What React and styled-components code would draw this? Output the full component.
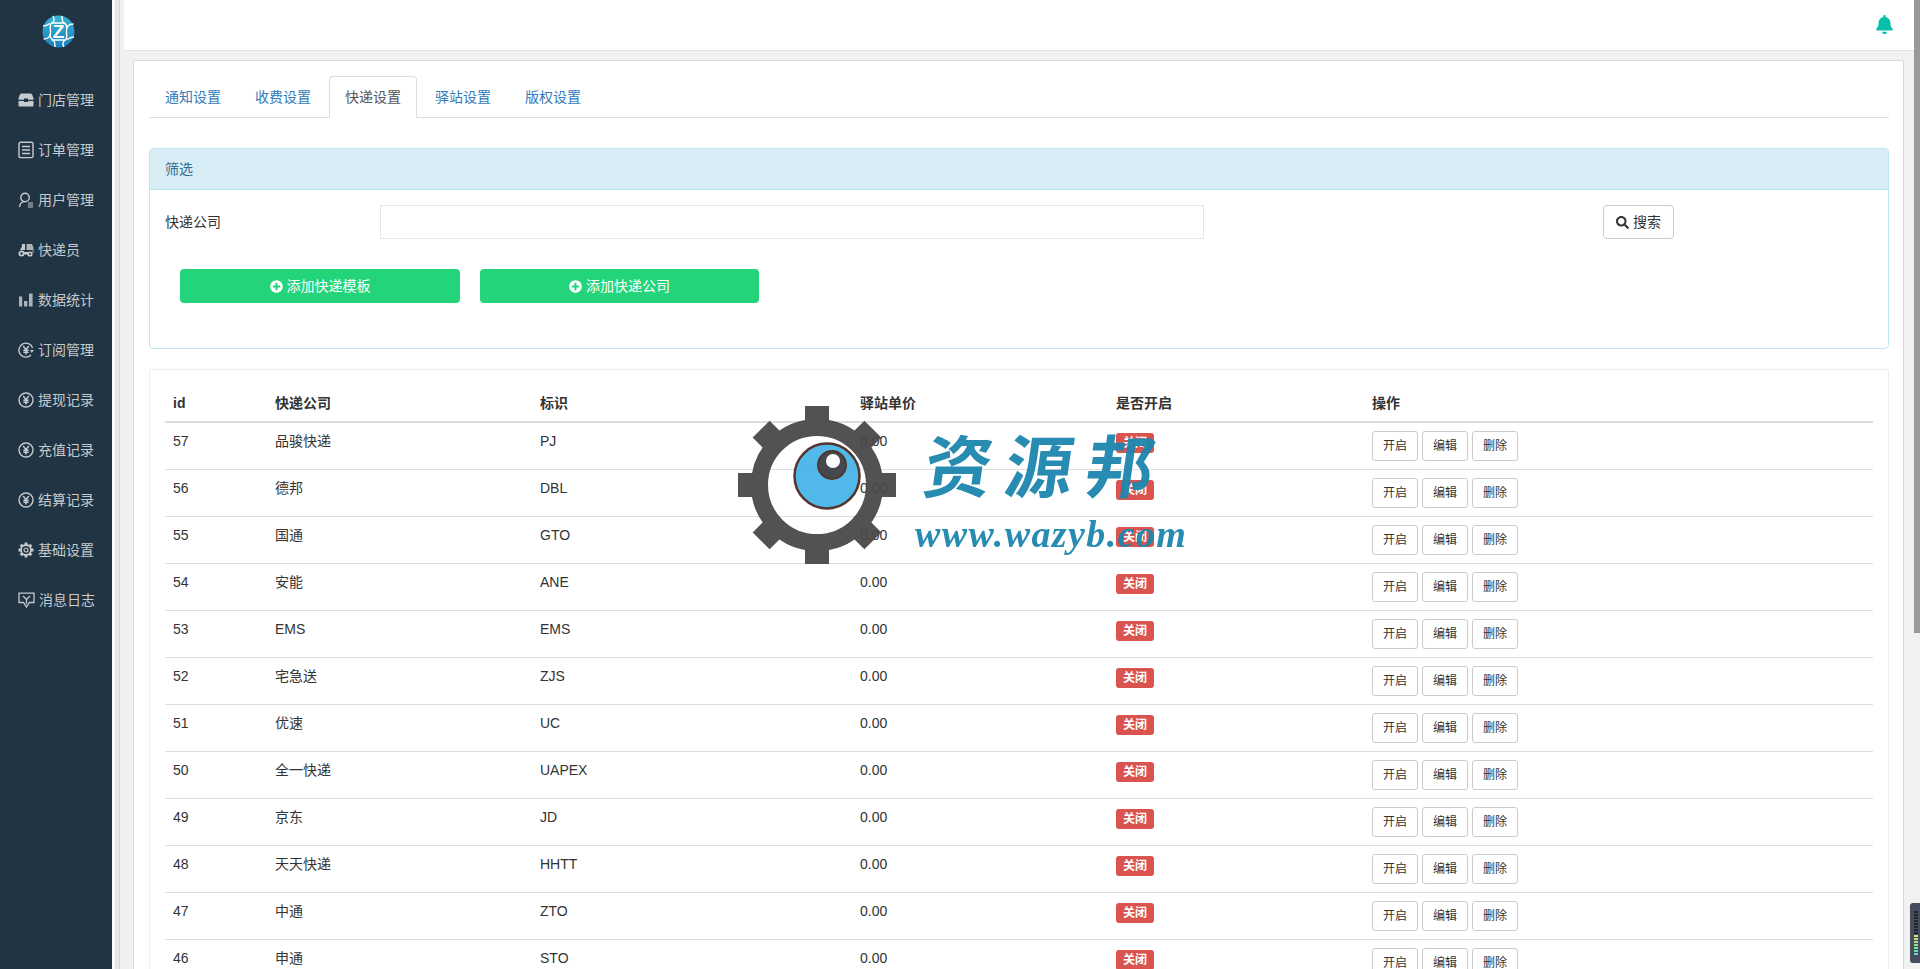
import styled, { createGlobalStyle } from "styled-components";
import { FaBell, FaPlusCircle, FaSearch } from "react-icons/fa";

const GlobalStyle = createGlobalStyle`
  * {
    box-sizing: border-box;
  }
  html,
  body {
    margin: 0;
    height: 100%;
    overflow: hidden;
  }
  body {
    font-family: "Liberation Sans", "Noto Sans CJK SC", sans-serif;
    font-size: 14px;
    line-height: 20px;
    color: #333;
    background: #f1f1f1;
  }
`;

const Page = styled.div`
  position: relative;
  display: flex;
  height: 969px;
  overflow: hidden;
`;

const Sidebar = styled.aside`
  flex: 0 0 112px;
  background: #203443;
  color: #c6cacd;
`;

const LogoWrap = styled.div`
  height: 75px;
  padding-top: 15px;
  display: flex;
  justify-content: center;
  svg {
    margin-left: 4px;
  }
`;

const NavItem = styled.div`
  height: 50px;
  padding-left: 18px;
  display: flex;
  align-items: center;
  gap: 4px;
  white-space: nowrap;
`;

const Gutter = styled.div`
  flex: 0 0 12px;
  background: linear-gradient(
    to right,
    #fbfbfb 0 3px,
    #e6e7eb 3px 7px,
    #d6d7db 7px 8px,
    #f0f0f0 8px 12px
  );
`;

const Main = styled.main`
  flex: 1;
  min-width: 0;
  display: flex;
  flex-direction: column;
`;

const TopBar = styled.header`
  flex: 0 0 51px;
  background: #fff;
  border-bottom: 1px solid #e2e2e2;
  display: flex;
  justify-content: flex-end;
  padding: 15px 20px 0 0;
  color: #08c0aa;
  font-size: 19px;
`;

const Content = styled.div`
  padding: 9px 10px 0 9px;
`;

const Card = styled.div`
  background: #fff;
  border: 1px solid #d9d9d9;
  border-radius: 2px;
  padding: 15px 14px 15px 15px;
`;

const Tabs = styled.ul`
  list-style: none;
  margin: 0 0 30px;
  padding: 0;
  display: flex;
  gap: 2px;
  border-bottom: 1px solid #ddd;
`;

const Tab = styled.li`
  padding: 10px 15px;
  margin-bottom: -1px;
  border: 1px solid ${(p) => (p.$active ? "#ddd" : "transparent")};
  border-bottom-color: ${(p) => (p.$active ? "#fff" : "transparent")};
  border-radius: 4px 4px 0 0;
  background: ${(p) => (p.$active ? "#fff" : "transparent")};
  color: ${(p) => (p.$active ? "#555" : "#337ab7")};
`;

const Panel = styled.section`
  border: 1px solid #bce8f1;
  border-radius: 4px;
`;

const PanelHeading = styled.div`
  padding: 10px 15px;
  background: #d9edf7;
  border-bottom: 1px solid #bce8f1;
  border-radius: 3px 3px 0 0;
  color: #31708f;
`;

const PanelBody = styled.div`
  padding: 15px 15px 45px;
`;

const FilterRow = styled.div`
  display: flex;
  align-items: center;
`;

const FilterLabel = styled.label`
  flex: 0 0 215px;
`;

const FilterInput = styled.input`
  width: 824px;
  height: 34px;
  border: 1px solid #e6e6e6;
  padding: 6px 12px;
`;

const SearchButton = styled.button`
  margin-left: 399px;
  width: 71px;
  height: 34px;
  display: flex;
  align-items: center;
  justify-content: center;
  gap: 4px;
  padding: 0;
  font: inherit;
  color: #333;
  background: #fff;
  border: 1px solid #ccc;
  border-radius: 4px;
  svg {
    font-size: 13px;
  }
`;

const AddRow = styled.div`
  margin-top: 30px;
  padding-left: 15px;
  display: flex;
  gap: 20px;
`;

const AddButton = styled.button`
  width: ${(p) => p.$w}px;
  height: 34px;
  display: flex;
  align-items: center;
  justify-content: center;
  gap: 4px;
  padding: 0;
  font: inherit;
  color: #fff;
  background: #23d47b;
  border: 0;
  border-radius: 4px;
  svg {
    font-size: 13px;
  }
`;

const TableCard = styled.section`
  margin-top: 20px;
  padding: 15px;
  border: 1px solid #eee;
  border-radius: 2px;
`;

const Table = styled.table`
  width: 100%;
  table-layout: fixed;
  border-collapse: collapse;
`;

const HeadCell = styled.th`
  width: ${(p) => (p.$w ? `${p.$w}px` : "auto")};
  padding: 8px;
  text-align: left;
  font-weight: 700;
  border-bottom: 2px solid #ddd;
`;

const Cell = styled.td`
  padding: 8px;
  vertical-align: top;
  border-bottom: 1px solid #ddd;
`;

const Badge = styled.span`
  display: inline-block;
  margin-top: 2px;
  padding: 0 7px;
  font-size: 12px;
  font-weight: 700;
  line-height: 20px;
  color: #fff;
  background: #d9534f;
  border-radius: 3px;
`;

const Actions = styled.div`
  display: flex;
  gap: 4px;
`;

const ActionButton = styled.button`
  width: 46px;
  height: 30px;
  padding: 0;
  font: inherit;
  font-size: 12px;
  color: #333;
  background: #fff;
  border: 1px solid #ccc;
  border-radius: 3px;
`;

const ScrollTrack = styled.div`
  flex: 0 0 6px;
  background: #f1f1f1;
`;

const ScrollThumb = styled.div`
  height: 633px;
  background: #999;
`;

const Meter = styled.div`
  position: absolute;
  right: 0;
  top: 903px;
  width: 10px;
  height: 60px;
  padding: 8px 2px 0 4px;
  display: flex;
  flex-direction: column;
  gap: 1px;
  background: #454c5c;
  border-radius: 3px 0 0 3px;
`;

const MeterBar = styled.span`
  height: 2px;
  background: ${(p) => p.$c};
`;

const Watermark = styled.div`
  position: absolute;
  left: 737px;
  top: 406px;
  display: flex;
  gap: 18px;
  pointer-events: none;
  opacity: 0.95;
`;

const BrandText = styled.div`
  padding-top: 14px;
  color: #1d86ae;
  filter: blur(0.6px);
`;

const BrandName = styled.div`
  padding-left: 10px;
  font-family: "Noto Sans CJK SC", sans-serif;
  font-size: 68px;
  line-height: 86px;
  letter-spacing: 13px;
  font-weight: 700;
  transform: skewX(-8deg);
  white-space: nowrap;
`;

const BrandUrl = styled.div`
  margin-top: 8px;
  font-family: "Liberation Serif", serif;
  font-style: italic;
  font-weight: 700;
  font-size: 38px;
  line-height: 40px;
  letter-spacing: 1.4px;
  white-space: nowrap;
`;

const Logo = () => (
  <svg width="33" height="33" viewBox="0 0 33 33">
    <defs>
      <linearGradient id="logoFill" x1="0" y1="0" x2="0" y2="1">
        <stop offset="0" stopColor="#37b2d2" />
        <stop offset="1" stopColor="#1f80bd" />
      </linearGradient>
    </defs>
    <circle cx="16.5" cy="16.5" r="16" fill="url(#logoFill)" />
    <g fill="none" stroke="#fff" strokeWidth="1.4">
      <path d="M11 1 C13 5 12 7 9.5 8 C8 9 8 11 8.5 16 C9 21 7 24 1.5 24" />
      <path d="M22 32 C20 28 21 26 23.5 25 C25 24 25 22 24.5 17 C24 12 26 9 31.5 9" />
      <path d="M1 11 C4 11 6 10 8 8.5 M25 24.5 C27 23 29 22 32 22" />
      <path d="M20 1 C20 5 20 7 22 8 C24 9 25 12 25 14 M13 32 C13 28 13 26 11 25 C9 24 8 21 8 19" />
      <path d="M9.5 8 H23 M9.5 25 H23.5" />
    </g>
    <text
      x="16.5"
      y="23"
      textAnchor="middle"
      fontFamily="Liberation Sans"
      fontWeight="700"
      fontSize="19"
      fill="#fff"
    >
      Z
    </text>
  </svg>
);

const StoreIcon = () => (
  <svg width="16" height="14" viewBox="0 0 16 14" fill="currentColor">
    <path d="M3.5 0.5 H12.5 Q14 0.5 14.5 2.5 L15.5 5.5 V6.8 H10 V5.5 H6 V6.8 H0.5 V5.5 L1.5 2.5 Q2 0.5 3.5 0.5 Z" />
    <path d="M0.5 8 H6 V9 H10 V8 H15.5 V12.5 Q15.5 13.5 14.5 13.5 H1.5 Q0.5 13.5 0.5 12.5 Z" />
  </svg>
);

const OrderIcon = () => (
  <svg width="16" height="18" viewBox="0 0 16 18" fill="none" stroke="currentColor" strokeWidth="1.4">
    <rect x="1" y="1.2" width="14" height="15.4" rx="1.6" />
    <path d="M4 5.5 H12 M4 9 H12 M4 12.5 H12" />
  </svg>
);

const UserIcon = () => (
  <svg width="16" height="16" viewBox="0 0 16 16" fill="none" stroke="currentColor" strokeWidth="1.4">
    <circle cx="7" cy="5.5" r="4.2" />
    <path d="M1.5 15 C2 11.5 4 9.8 6 9.6" />
    <path d="M10 11 H15 M10 13 H15 M10 15 H15" strokeWidth="1" />
  </svg>
);

const CourierIcon = () => (
  <svg width="16" height="14" viewBox="0 0 16 14" fill="currentColor">
    <path d="M4 1 H7 V7 H2 L4 3.5 Z" />
    <path d="M9 1 H14 L15.5 5 V10 H14.6 V7 H8.5 V1.5 Z" fillOpacity="0.85" />
    <circle cx="3.5" cy="10.5" r="3" />
    <circle cx="3.5" cy="10.5" r="1.2" fill="#203443" />
    <circle cx="12" cy="11" r="2.6" />
    <circle cx="12" cy="11" r="1" fill="#203443" />
    <rect x="6" y="9" width="4" height="2.5" />
  </svg>
);

const ChartIcon = () => (
  <svg width="16" height="14" viewBox="0 0 16 14" fill="currentColor" fillOpacity="0.85">
    <rect x="1" y="3.5" width="3.2" height="10" />
    <rect x="6" y="8" width="3.4" height="5.5" />
    <rect x="11" y="0.5" width="3.6" height="13" />
  </svg>
);

const YenMark = () => (
  <path
    d="M5.2 4 L8 7.6 L10.8 4 M8 7.6 V12.6 M5.4 8.3 H10.6 M5.4 10.3 H10.6"
    fill="none"
    stroke="currentColor"
    strokeWidth="1.5"
  />
);

const YenIcon = () => (
  <svg width="16" height="16" viewBox="0 0 16 16" fill="none" stroke="currentColor" strokeWidth="1.4">
    <circle cx="8" cy="8" r="7" />
    <YenMark />
  </svg>
);

const RenewIcon = () => (
  <svg width="16" height="16" viewBox="0 0 16 16" fill="none" stroke="currentColor" strokeWidth="1.4">
    <path d="M14.6 6 A7 7 0 1 0 13 13" />
    <path d="M12 8 L15.8 8 L13.9 11 Z" fill="currentColor" stroke="none" />
    <YenMark />
  </svg>
);

const GearIcon = () => (
  <svg width="16" height="16" viewBox="0 0 16 16" fill="none" stroke="currentColor">
    <circle cx="8" cy="8" r="5" strokeWidth="1.8" />
    <circle cx="8" cy="8" r="2" strokeWidth="1.2" />
    <path
      d="M8 0.5 V3 M8 13 V15.5 M0.5 8 H3 M13 8 H15.5 M2.7 2.7 L4.5 4.5 M11.5 11.5 L13.3 13.3 M2.7 13.3 L4.5 11.5 M11.5 4.5 L13.3 2.7"
      strokeWidth="2.8"
    />
  </svg>
);

const MessageIcon = () => (
  <svg width="17" height="16" viewBox="0 0 17 16" fill="none" stroke="currentColor" strokeWidth="1.3">
    <path d="M1 1.2 H16 V10.5 H11.5 L8.5 15 L5.5 10.5 H1 Z" />
    <path d="M5 4 L8.5 7.5 L12 4 M8.5 7.5 V12" />
  </svg>
);

const GearMark = () => {
  const teeth = [0, 45, 90, 135, 180, 225, 270, 315];
  return (
    <svg width="160" height="158" viewBox="0 0 160 158">
      <g transform="translate(80 79)" fill="#494949">
        {teeth.map((a) => (
          <rect key={a} x="-12" y="-79" width="24" height="20" transform={`rotate(${a})`} />
        ))}
      </g>
      <circle cx="80" cy="79" r="57.5" fill="none" stroke="#494949" strokeWidth="17" />
      <circle cx="90" cy="70" r="32.5" fill="#47b6e9" stroke="#4b2a22" strokeWidth="2.5" />
      <circle cx="95" cy="59" r="14" fill="#3b4046" stroke="#4b2a22" strokeWidth="2" />
      <circle cx="96" cy="55" r="7" fill="#fff" />
    </svg>
  );
};

const NAV = [
  [StoreIcon, "门店管理"],
  [OrderIcon, "订单管理"],
  [UserIcon, "用户管理"],
  [CourierIcon, "快递员"],
  [ChartIcon, "数据统计"],
  [RenewIcon, "订阅管理"],
  [YenIcon, "提现记录"],
  [YenIcon, "充值记录"],
  [YenIcon, "结算记录"],
  [GearIcon, "基础设置"],
  [MessageIcon, "消息日志"],
];

const TABS = ["通知设置", "收费设置", "快递设置", "驿站设置", "版权设置"];

const ROWS = [
  [57, "品骏快递", "PJ"],
  [56, "德邦", "DBL"],
  [55, "国通", "GTO"],
  [54, "安能", "ANE"],
  [53, "EMS", "EMS"],
  [52, "宅急送", "ZJS"],
  [51, "优速", "UC"],
  [50, "全一快递", "UAPEX"],
  [49, "京东", "JD"],
  [48, "天天快递", "HHTT"],
  [47, "中通", "ZTO"],
  [46, "申通", "STO"],
];

const METER = [
  ...Array(8).fill("#23262e"),
  "#cfe070",
  "#c4e078",
  "#a8e080",
  "#8fe08c",
  "#7de09c",
  "#6cdfac",
  "#5fdcc0",
];

const App = () => {
  return (
    <Page>
      <GlobalStyle />
      <Sidebar>
        <LogoWrap>
          <Logo />
        </LogoWrap>
        {NAV.map(([Icon, label]) => (
          <NavItem key={label}>
            <Icon />
            <span>{label}</span>
          </NavItem>
        ))}
      </Sidebar>
      <Gutter />
      <Main>
        <TopBar>
          <FaBell />
        </TopBar>
        <Content>
          <Card>
            <Tabs>
              {TABS.map((t) => (
                <Tab key={t} $active={t === "快递设置"}>
                  {t}
                </Tab>
              ))}
            </Tabs>
            <Panel>
              <PanelHeading>筛选</PanelHeading>
              <PanelBody>
                <FilterRow>
                  <FilterLabel>快递公司</FilterLabel>
                  <FilterInput />
                  <SearchButton>
                    <FaSearch />
                    搜索
                  </SearchButton>
                </FilterRow>
                <AddRow>
                  <AddButton $w={280}>
                    <FaPlusCircle />
                    添加快递模板
                  </AddButton>
                  <AddButton $w={279}>
                    <FaPlusCircle />
                    添加快递公司
                  </AddButton>
                </AddRow>
              </PanelBody>
            </Panel>
            <TableCard>
              <Table>
                <thead>
                  <tr>
                    <HeadCell $w={102}>id</HeadCell>
                    <HeadCell $w={265}>快递公司</HeadCell>
                    <HeadCell $w={320}>标识</HeadCell>
                    <HeadCell $w={256}>驿站单价</HeadCell>
                    <HeadCell $w={256}>是否开启</HeadCell>
                    <HeadCell>操作</HeadCell>
                  </tr>
                </thead>
                <tbody>
                  {ROWS.map(([id, name, code]) => (
                    <tr key={id}>
                      <Cell>{id}</Cell>
                      <Cell>{name}</Cell>
                      <Cell>{code}</Cell>
                      <Cell>0.00</Cell>
                      <Cell>
                        <Badge>关闭</Badge>
                      </Cell>
                      <Cell>
                        <Actions>
                          <ActionButton>开启</ActionButton>
                          <ActionButton>编辑</ActionButton>
                          <ActionButton>删除</ActionButton>
                        </Actions>
                      </Cell>
                    </tr>
                  ))}
                </tbody>
              </Table>
            </TableCard>
          </Card>
        </Content>
      </Main>
      <ScrollTrack>
        <ScrollThumb />
      </ScrollTrack>
      <Meter>
        {METER.map((c, i) => (
          <MeterBar key={i} $c={c} />
        ))}
      </Meter>
      <Watermark>
        <GearMark />
        <BrandText>
          <BrandName>资源邦</BrandName>
          <BrandUrl>www.wazyb.com</BrandUrl>
        </BrandText>
      </Watermark>
    </Page>
  );
};

export default App;
